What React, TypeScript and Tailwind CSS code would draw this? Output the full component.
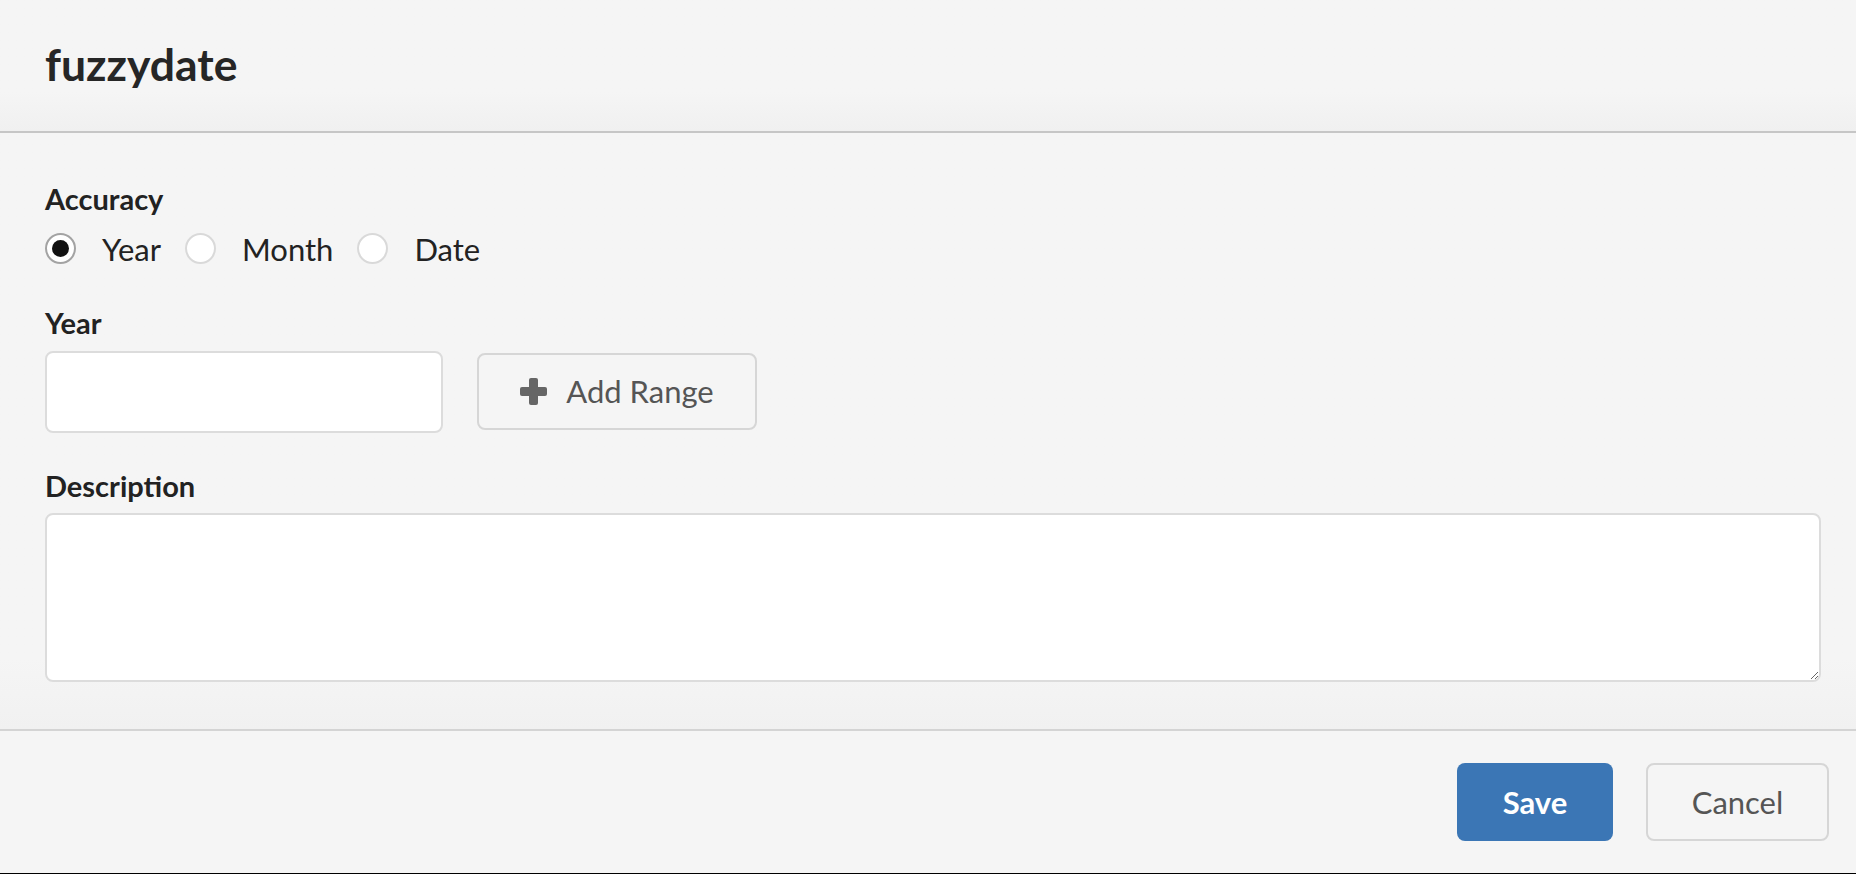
import React from 'react';

const PlusIcon = () => (
    <svg width="27" height="27" viewBox="0 0 27 27" className="shrink-0">
        <rect x="9" y="0" width="9" height="27" rx="2" fill="#666" />
        <rect x="0" y="9" width="27" height="9" rx="2" fill="#666" />
    </svg>
);

const Radio = ({ label, checked }: { label: string; checked?: boolean }) => (
    <label className="flex items-center mr-[24px]">
        <span
            className={
                checked
                    ? "w-[31px] h-[31px] rounded-full border-2 border-[#a3a3a3] bg-white flex items-center justify-center"
                    : "w-[31px] h-[31px] rounded-full border-2 border-[#d9d9d9] bg-white"
            }
        >
            {checked && <span className="w-[17px] h-[17px] rounded-full bg-[#111]" />}
        </span>
        <span className="ml-[26px] text-[31px] leading-[36px] text-[#222]">{label}</span>
    </label>
);

const App = () => {
    const accuracy = ["Year", "Month", "Date"];

    return (
        <div className="w-full h-[874px] bg-[#f5f5f5] font-['Lato',sans-serif] flex flex-col border-b border-black overflow-hidden">
            {/* header */}
            <div className="h-[131px] shrink-0 px-[45px] pt-[37px] bg-linear-to-b from-[#f5f5f5] from-70% to-[#f0f0f0]">
                <h1 className="text-[44.5px] leading-[1.2] font-bold text-[#262626]">fuzzydate</h1>
            </div>
            <div className="h-[2px] shrink-0 bg-[#c6c6c6]" />

            {/* body */}
            <div className="h-[596px] shrink-0 pl-[45px] pr-[35px] pt-[49px] flex flex-col bg-linear-to-b from-[#f5f5f5] from-88% to-[#f1f1f1]">
                <div className="text-[29px] leading-[1.2] font-bold text-[#222]">Accuracy</div>
                <div className="mt-[14px] flex items-center h-[36px]">
                    {accuracy.map((a, i) => (
                        <Radio key={a} label={a} checked={i === 0} />
                    ))}
                </div>

                <div className="mt-[39px] text-[29px] leading-[1.2] font-bold text-[#222]">Year</div>
                <div className="mt-[10px] flex items-center">
                    <input
                        type="text"
                        className="w-[398px] h-[82px] rounded-[8px] border-2 border-[#dcdcdc] bg-white px-4 text-[28px] outline-none"
                    />
                    <button className="ml-[34px] w-[280px] h-[77px] rounded-[8px] border-2 border-[#d6d6d6] bg-[#f5f5f5] flex items-center justify-center gap-[19px] text-[31px] text-[#555]">
                        <PlusIcon />
                        <span>Add Range</span>
                    </button>
                </div>

                <div className="mt-[36px] text-[29px] leading-[1.2] font-bold text-[#222]">Description</div>
                <textarea className="mt-[10px] w-full h-[169px] rounded-[8px] border-2 border-[#dcdcdc] bg-white p-3 text-[28px] outline-none" />
            </div>
            <div className="h-[2px] shrink-0 bg-[#d4d4d4]" />

            {/* footer */}
            <div className="flex-1 flex justify-end items-start pt-[32px] pr-[27px] gap-[33px]">
                <button className="w-[156px] h-[78px] rounded-[8px] bg-[#3b76b5] text-white text-[31px] font-bold">
                    Save
                </button>
                <button className="w-[183px] h-[78px] rounded-[8px] border-2 border-[#d6d6d6] bg-[#f5f5f5] text-[#555] text-[31px]">
                    Cancel
                </button>
            </div>
        </div>
    );
};

export default App;
